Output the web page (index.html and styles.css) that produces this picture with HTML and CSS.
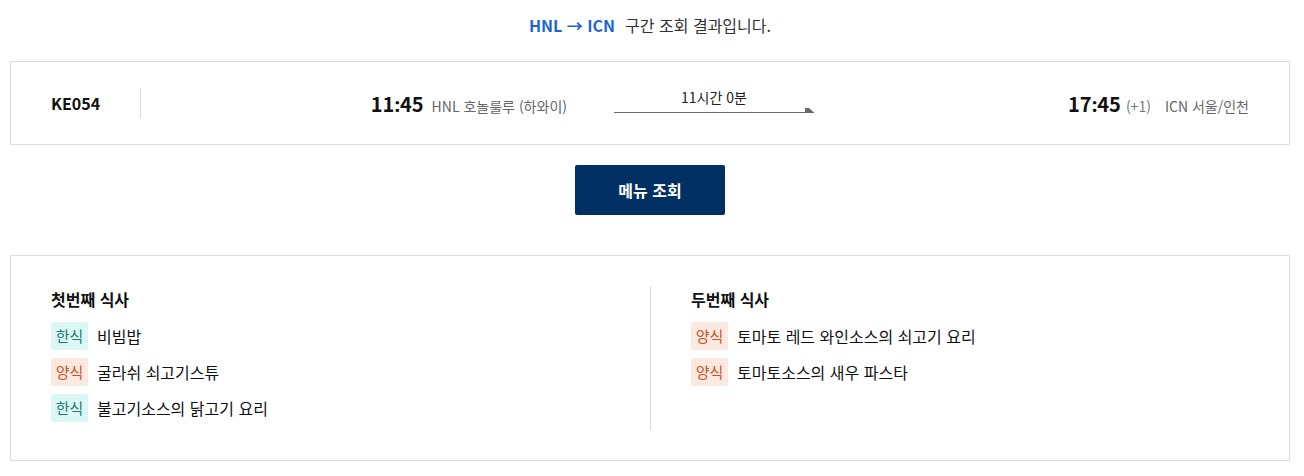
FILE: index.html
```html
<!DOCTYPE html>
<html lang="ko">
<head>
<meta charset="utf-8">
<link rel="stylesheet" href="styles.css">
</head>
<body>
<div class="page">
  <div class="title"><span class="route">HNL → ICN</span><span class="title-text">구간 조회 결과입니다.</span></div>

  <div class="flight-card">
    <div class="flight-no">KE054</div>
    <div class="dep">
      <span class="time">11<span class="colon">:</span>45</span>
      <span class="city">HNL 호놀룰루 (하와이)</span>
    </div>
    <div class="duration">
      <span class="dur-text">11시간 0분</span>
      <svg class="dur-line" width="200" height="6" viewBox="0 0 200 6">
        <line x1="0" y1="5.5" x2="200" y2="5.5" stroke="#6b6b6b" stroke-width="1"/>
        <polygon points="191,1 195,1 200,5.5 191,5.5" fill="#6b6b6b"/>
      </svg>
    </div>
    <div class="arr">
      <span class="time">17<span class="colon">:</span>45</span>
      <span class="plus">(+1)</span>
      <span class="city">ICN 서울/인천</span>
    </div>
  </div>

  <div class="btn-row"><button class="btn">메뉴 조회</button></div>

  <div class="meal-card">
    <div class="meal-col">
      <div class="meal-title">첫번째 식사</div>
      <ul class="meal-list">
        <li><span class="tag kor">한식</span><span class="dish">비빔밥</span></li>
        <li><span class="tag west">양식</span><span class="dish">굴라쉬 쇠고기스튜</span></li>
        <li><span class="tag kor">한식</span><span class="dish">불고기소스의 닭고기 요리</span></li>
      </ul>
    </div>
    <div class="meal-col second">
      <div class="meal-title">두번째 식사</div>
      <ul class="meal-list">
        <li><span class="tag west">양식</span><span class="dish">토마토 레드 와인소스의 쇠고기 요리</span></li>
        <li><span class="tag west">양식</span><span class="dish">토마토소스의 새우 파스타</span></li>
      </ul>
    </div>
  </div>
</div>
</body>
</html>
```

FILE: styles.css
```css
* { box-sizing: border-box; }
html, body { margin: 0; padding: 0; background: #fff; }
body {
  font-family: "Noto Sans CJK KR", "Noto Sans", sans-serif;
  color: #111;
}
.page { padding: 10px 14px 0 10px; }

.title {
  height: 30px;
  line-height: 30px;
  text-align: center;
  font-size: 16px;
  margin-bottom: 21px;
}
.route { color: #1a66d2; font-weight: 700; }
.title-text { color: #333; margin-left: 10px; }

.flight-card {
  border: 1px solid #dcdcdc;
  height: 84px;
  padding: 0 40px;
  display: grid;
  grid-template-columns: 90px 1fr 200px 435px;
  align-items: center;
}
.flight-no {
  font-size: 16px;
  font-weight: 700;
  height: 30px;
  line-height: 30px;
  border-right: 1px solid #dcdcdc;
}
.dep {
  justify-self: end;
  margin-right: 47px;
  display: flex;
  align-items: baseline;
  gap: 8px;
}
.time { font-size: 20px; font-weight: 700; color: #111; }
.colon { font-family: "Noto Sans", "DejaVu Sans", sans-serif; }
.city { font-size: 14px; color: #666; }
.plus { font-size: 14px; color: #777; margin-left: 0; margin-right: 9px; }
.arr {
  justify-self: end;
  display: flex;
  align-items: baseline;
  gap: 5px;
}
.duration {
  display: flex;
  flex-direction: column;
  align-items: center;
  margin-top: -5px;
}
.dur-text { font-size: 14px; color: #222; line-height: 18px; margin-bottom: 1px; }
.dur-line { display: block; }

.btn-row { display: flex; justify-content: center; margin: 20px 0 40px; }
.btn {
  width: 150px;
  height: 50px;
  border: none;
  border-radius: 2px;
  background: #002f63;
  color: #fff;
  font-family: inherit;
  font-size: 16px;
  font-weight: 700;
}

.meal-card {
  border: 1px solid #dcdcdc;
  padding: 30px 40px;
  display: grid;
  grid-template-columns: 1fr 1fr;
}
.meal-col { padding-bottom: 8px; }
.meal-col.second { border-left: 1px solid #dcdcdc; padding-left: 40px; }
.meal-title {
  font-size: 16px;
  font-weight: 700;
  line-height: 26px;
  margin-bottom: 10px;
}
.meal-list {
  list-style: none;
  margin: 0;
  padding: 0;
  display: flex;
  flex-direction: column;
  gap: 8px;
}
.meal-list li { display: flex; align-items: center; gap: 9px; }
.tag {
  width: 37px;
  height: 28px;
  line-height: 28px;
  text-align: center;
  font-size: 15px;
  border-radius: 2px;
}
.tag.kor { background: #dcf8f5; color: #1f7a70; }
.tag.west { background: #fbe8de; color: #c9532a; }
.dish { font-size: 16px; color: #111; }
```
